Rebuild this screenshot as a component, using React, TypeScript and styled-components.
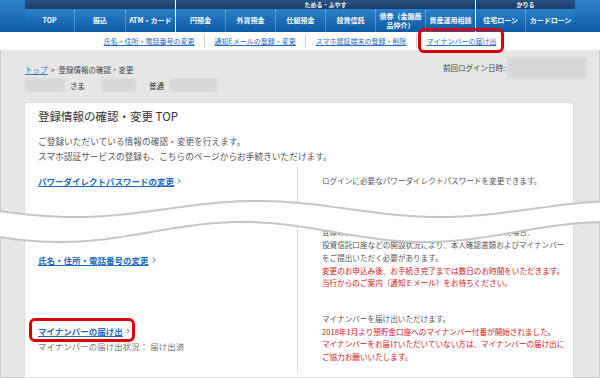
import styled, { createGlobalStyle } from 'styled-components';

const GlobalStyle = createGlobalStyle`
  html, body {
    margin: 0;
    padding: 0;
  }
  body {
    font-family: 'Noto Sans CJK JP', 'Noto Sans', sans-serif;
    background: #fff;
  }
  * {
    box-sizing: border-box;
  }
`;

const Frame = styled.div`
  position: relative;
  width: 600px;
  height: 378px;
  overflow: hidden;
  display: flex;
  flex-direction: column;
  background: #e6e6e6;
`;

/* ---- global nav ---- */

const Nav = styled.nav`
  display: flex;
  height: 32px;
  flex-shrink: 0;
`;

const NavEdge = styled.div`
  width: 25px;
  background: linear-gradient(#2e83cc, #0d5aa3);
`;

const NavGroup = styled.div<{ $w: number }>`
  width: ${(p) => p.$w}px;
  display: flex;
  flex-direction: column;

  & + & {
    border-left: 1px solid #fff;
  }
`;

const GroupHead = styled.div`
  height: 9px;
  background: linear-gradient(#2a5283, #173a6b);
  color: #fff;
  font-size: 6px;
  font-weight: 700;
  line-height: 9px;
  text-align: center;
`;

const Cells = styled.div`
  flex: 1;
  display: flex;
`;

const Cell = styled.a`
  flex: 1;
  display: flex;
  align-items: center;
  justify-content: center;
  background: linear-gradient(#2a80cb, #0c5aa3);
  color: #fff;
  font-size: 7px;
  font-weight: 700;
  line-height: 8.5px;
  text-align: center;
  white-space: pre-line;

  & + & {
    border-left: 1px solid rgba(255, 255, 255, 0.28);
  }
`;

/* ---- sub nav ---- */

const SubNav = styled.div`
  height: 18px;
  flex-shrink: 0;
  display: flex;
  align-items: center;
  justify-content: center;
  background: #fff;
`;

const SubLink = styled.a<{ $marked?: boolean }>`
  position: relative;
  display: flex;
  align-items: center;
  height: 14px;
  padding: 0 9.5px;
  font-size: 7px;
  color: #1d6dc1;
  text-decoration: underline;
  white-space: nowrap;

  & + & {
    border-left: 1px solid #d6d6d6;
  }

  ${(p) =>
    p.$marked &&
    `
    &::after {
      content: '';
      position: absolute;
      left: 1px;
      right: 2px;
      top: -6px;
      bottom: -5px;
      border: 3px solid #d9000d;
      border-radius: 6px;
    }
  `}
`;

/* ---- main area ---- */

const Main = styled.main`
  flex: 1;
  display: flex;
  flex-direction: column;
  border: 1px solid #cacaca;
  border-top: 0;
  padding: 0 12px 0 24px;
`;

const InfoRow = styled.div`
  height: 21px;
  margin-top: 7px;
  display: flex;
  align-items: center;
  justify-content: space-between;
  font-size: 7.5px;
  color: #444;
`;

const Breadcrumb = styled.div`
  margin-top: 4px;
  line-height: 12px;

  a {
    color: #2a74c4;
    text-decoration: underline;
  }
`;

const LastLogin = styled.div`
  display: flex;
  align-items: center;
  gap: 2px;
`;

const UserRow = styled.div`
  height: 14px;
  display: flex;
  align-items: center;
  font-size: 7.5px;
  color: #333;
`;

const Blur = styled.span<{ $w: number; $h?: number; $ml?: number; $mr?: number }>`
  display: inline-block;
  width: ${(p) => p.$w}px;
  height: ${(p) => p.$h ?? 14}px;
  margin-left: ${(p) => p.$ml ?? 0}px;
  margin-right: ${(p) => p.$mr ?? 0}px;
  background: #d8d8d8;
  border-radius: 2px;
  filter: blur(1.2px);
`;

const Panel = styled.section`
  flex: 1;
  margin: 11px 14px 0 0;
  padding: 5px 0 0 13px;
  background: #fff;
  border-radius: 3px 3px 0 0;
  box-shadow: 0 0 0 1px #dedede;
`;

const Title = styled.h1`
  margin: 0;
  font-size: 11.5px;
  font-weight: 400;
  line-height: 16px;
  color: #333;
`;

const Desc = styled.p`
  margin: 10px 0 0;
  font-size: 8.7px;
  line-height: 15px;
  color: #555;
`;

const Table = styled.div`
  margin-top: 3px;
`;

const Row = styled.div`
  display: grid;
  grid-template-columns: 259px 1fr;
`;

const LeftCell = styled.div<{ $pt?: number }>`
  display: flex;
  flex-direction: column;
  justify-content: center;
  align-items: flex-start;
  padding-top: ${(p) => p.$pt ?? 0}px;
`;

const RightCell = styled.div<{ $pt: number; $pb: number }>`
  border-left: 1px solid #dcdcdc;
  padding: ${(p) => p.$pt}px 0 ${(p) => p.$pb}px 24px;
  font-size: 7.6px;
  line-height: 12.7px;
  color: #555;
  white-space: nowrap;
`;

const Red = styled.span`
  color: #d3121b;
`;

const ArrowLink = styled.a<{ $marked?: boolean }>`
  position: relative;
  display: inline-flex;
  align-items: center;
  font-size: 8.5px;
  font-weight: 700;
  line-height: 12px;
  color: #1c6bbf;
  text-decoration: none;

  ${(p) =>
    p.$marked &&
    `
    &::after {
      content: '';
      position: absolute;
      left: -9px;
      right: -6px;
      top: -7px;
      bottom: -5px;
      border: 3px solid #d9000d;
      border-radius: 6px;
    }
  `}
`;

const LinkText = styled.span`
  text-decoration: underline;
`;

const Chevron = styled.span`
  display: inline-block;
  width: 4px;
  height: 4px;
  margin-left: 2px;
  border-top: 1px solid #7d9cc6;
  border-right: 1px solid #7d9cc6;
  transform: rotate(45deg);
`;

const Status = styled.div`
  margin-top: 3px;
  font-size: 8.5px;
  line-height: 12px;
  color: #777;
`;

/* ---- torn-page wave overlay ---- */

const WaveSvg = styled.svg`
  position: absolute;
  left: 0;
  top: 190px;
  width: 600px;
  height: 70px;
  pointer-events: none;
`;

const WAVE_Y = 190;
const PERIOD = 365;
const topY = (x: number) => 209 + 8 * Math.cos((2 * Math.PI * (x - 75)) / PERIOD) - WAVE_Y;
const botY = (x: number) => 232 + 10 * Math.cos((2 * Math.PI * (x - 60)) / PERIOD) - WAVE_Y;

function Wave() {
  const xs: number[] = [];
  for (let x = -5; x <= 605; x += 5) xs.push(x);
  const top = xs.map((x) => `${x},${topY(x).toFixed(2)}`);
  const bot = xs.map((x) => `${x},${botY(x).toFixed(2)}`);
  const fill = `M${top.join(' L')} L${[...bot].reverse().join(' L')} Z`;
  return (
    <WaveSvg viewBox="0 0 600 70">
      <path d={fill} fill="#fff" />
      <path d={`M${top.join(' L')}`} fill="none" stroke="#c6c6c6" strokeWidth="2" />
      <path d={`M${bot.join(' L')}`} fill="none" stroke="#c6c6c6" strokeWidth="2" />
    </WaveSvg>
  );
}

const navGroups = [
  { w: 150, label: '', items: ['TOP', '振込', 'ATM・カード'] },
  {
    w: 300,
    label: 'ためる・ふやす',
    items: ['円預金', '外貨預金', '仕組預金', '投資信託', '債券（金融商\n品仲介）', '資産運用相談'],
  },
  { w: 100, label: 'かりる', items: ['住宅ローン', 'カードローン'] },
];

const subLinks = [
  '氏名・住所・電話番号の変更',
  '通知Eメールの登録・変更',
  'スマホ認証端末の登録・削除',
  'マイナンバーの届け出',
];

export default function App() {
  return (
    <>
      <GlobalStyle />
      <Frame>
        <Nav>
          <NavEdge />
          {navGroups.map((g) => (
            <NavGroup $w={g.w} key={g.w}>
              <GroupHead>{g.label}</GroupHead>
              <Cells>
                {g.items.map((item) => (
                  <Cell key={item}>{item}</Cell>
                ))}
              </Cells>
            </NavGroup>
          ))}
          <NavEdge />
        </Nav>

        <SubNav>
          {subLinks.map((l, i) => (
            <SubLink key={l} $marked={i === subLinks.length - 1}>
              {l}
            </SubLink>
          ))}
        </SubNav>

        <Main>
          <InfoRow>
            <Breadcrumb>
              <a>トップ</a>&nbsp;&nbsp;&gt;&nbsp;&nbsp;登録情報の確認・変更
            </Breadcrumb>
            <LastLogin>
              前回ログイン日時:
              <Blur $w={80} $h={21} />
            </LastLogin>
          </InfoRow>
          <UserRow>
            <Blur $w={40} $mr={5} />
            さま
            <Blur $w={35} $ml={16} $mr={13} />
            普通
            <Blur $w={47} $ml={6} />
          </UserRow>

          <Panel>
            <Title>登録情報の確認・変更 TOP</Title>
            <Desc>
              ご登録いただいている情報の確認・変更を行えます。
              <br />
              スマホ認証サービスの登録も、こちらのページからお手続きいただけます。
            </Desc>

            <Table>
              <Row>
                <LeftCell>
                  <ArrowLink>
                    <LinkText>パワーダイレクトパスワードの変更</LinkText>
                    <Chevron />
                  </ArrowLink>
                </LeftCell>
                <RightCell $pt={8} $pb={8}>
                  ログインに必要なパワーダイレクトパスワードを変更できます。
                </RightCell>
              </Row>

              <Row>
                <LeftCell $pt={24}>
                  <ArrowLink>
                    <LinkText>氏名・住所・電話番号の変更</LinkText>
                    <Chevron />
                  </ArrowLink>
                </LeftCell>
                <RightCell $pt={18} $pb={10}>
                  氏名・住所・電話番号の変更のお申込みができます。ご
                  <br />
                  登録の氏名・住所・電話番号の変更のお申込みがあった場合、
                  <br />
                  投資信託口座などの開設状況により、本人確認書類およびマイナンバー
                  <br />
                  をご提出いただく必要があります。
                  <br />
                  <Red>
                    変更のお申込み後、お手続き完了までは数日のお時間をいただきます。
                    <br />
                    当行からのご案内（通知Ｅメール）をお待ちください。
                  </Red>
                </RightCell>
              </Row>

              <Row>
                <LeftCell $pt={5}>
                  <ArrowLink $marked>
                    <LinkText>マイナンバーの届け出</LinkText>
                    <Chevron />
                  </ArrowLink>
                  <Status>マイナンバーの届け出状況： 届け出済</Status>
                </LeftCell>
                <RightCell $pt={13} $pb={8}>
                  マイナンバーを届け出いただけます。
                  <br />
                  <Red>
                    2018年1月より預貯金口座へのマイナンバー付番が開始されました。
                    <br />
                    マイナンバーをお届けいただいていない方は、マイナンバーの届け出に
                    <br />
                    ご協力お願いいたします。
                  </Red>
                </RightCell>
              </Row>
            </Table>
          </Panel>
        </Main>

        <Wave />
      </Frame>
    </>
  );
}
